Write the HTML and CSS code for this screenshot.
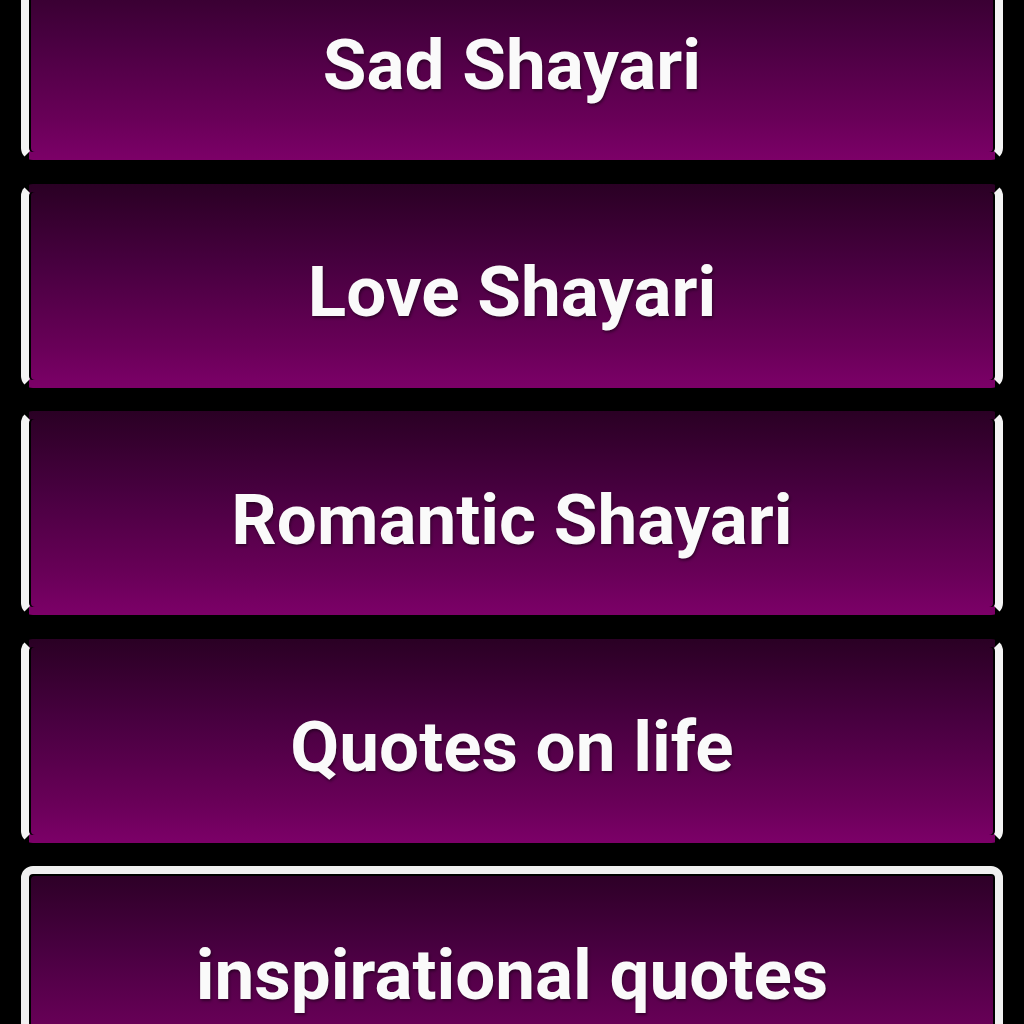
FILE: index.html
```html
<!DOCTYPE html>
<html>
<head>
<meta charset="utf-8">
<link rel="stylesheet" href="styles.css">
</head>
<body>
<div class="list">
  <div class="btn"><span class="label">Sad Shayari</span></div>
  <div class="btn"><span class="label">Love Shayari</span></div>
  <div class="btn"><span class="label">Romantic Shayari</span></div>
  <div class="btn"><span class="label">Quotes on life</span></div>
  <div class="btn focused"><span class="label">inspirational quotes</span></div>
</div>
</body>
</html>
```
FILE: styles.css
```css
html, body {
  margin: 0;
  padding: 0;
  background: #000;
  width: 1024px;
  height: 1024px;
  overflow: hidden;
}
.list {
  display: flex;
  flex-direction: column;
  gap: 23.5px;
  padding: 0 21px 0 21px;
  margin-top: -44px;
}
.btn {
  height: 204px;
  flex: none;
  box-sizing: border-box;
  border: 8px solid transparent;
  border-left-color: #f4f4f4;
  border-right-color: #f4f4f4;
  border-radius: 12px;
  background: linear-gradient(to bottom, #2a0024 0%, #480040 40%, #690058 80%, #7c0068 100%) border-box;
  box-shadow: inset 2px 0 0 #000, inset -2px 0 0 #000;
  display: flex;
  align-items: center;
  justify-content: center;
  padding-top: 12px;
}
.btn.focused {
  border-color: #f0f0f0;
  box-shadow: inset 2px 2px 0 #000, inset -2px 0 0 #000;
}
.label {
  font-family: Roboto, "Liberation Sans", sans-serif;
  font-weight: 700;
  font-size: 71px;
  color: #fafafa;
  text-shadow: 1px 2px 3px rgba(0, 0, 0, 0.45);
  white-space: nowrap;
}
```
